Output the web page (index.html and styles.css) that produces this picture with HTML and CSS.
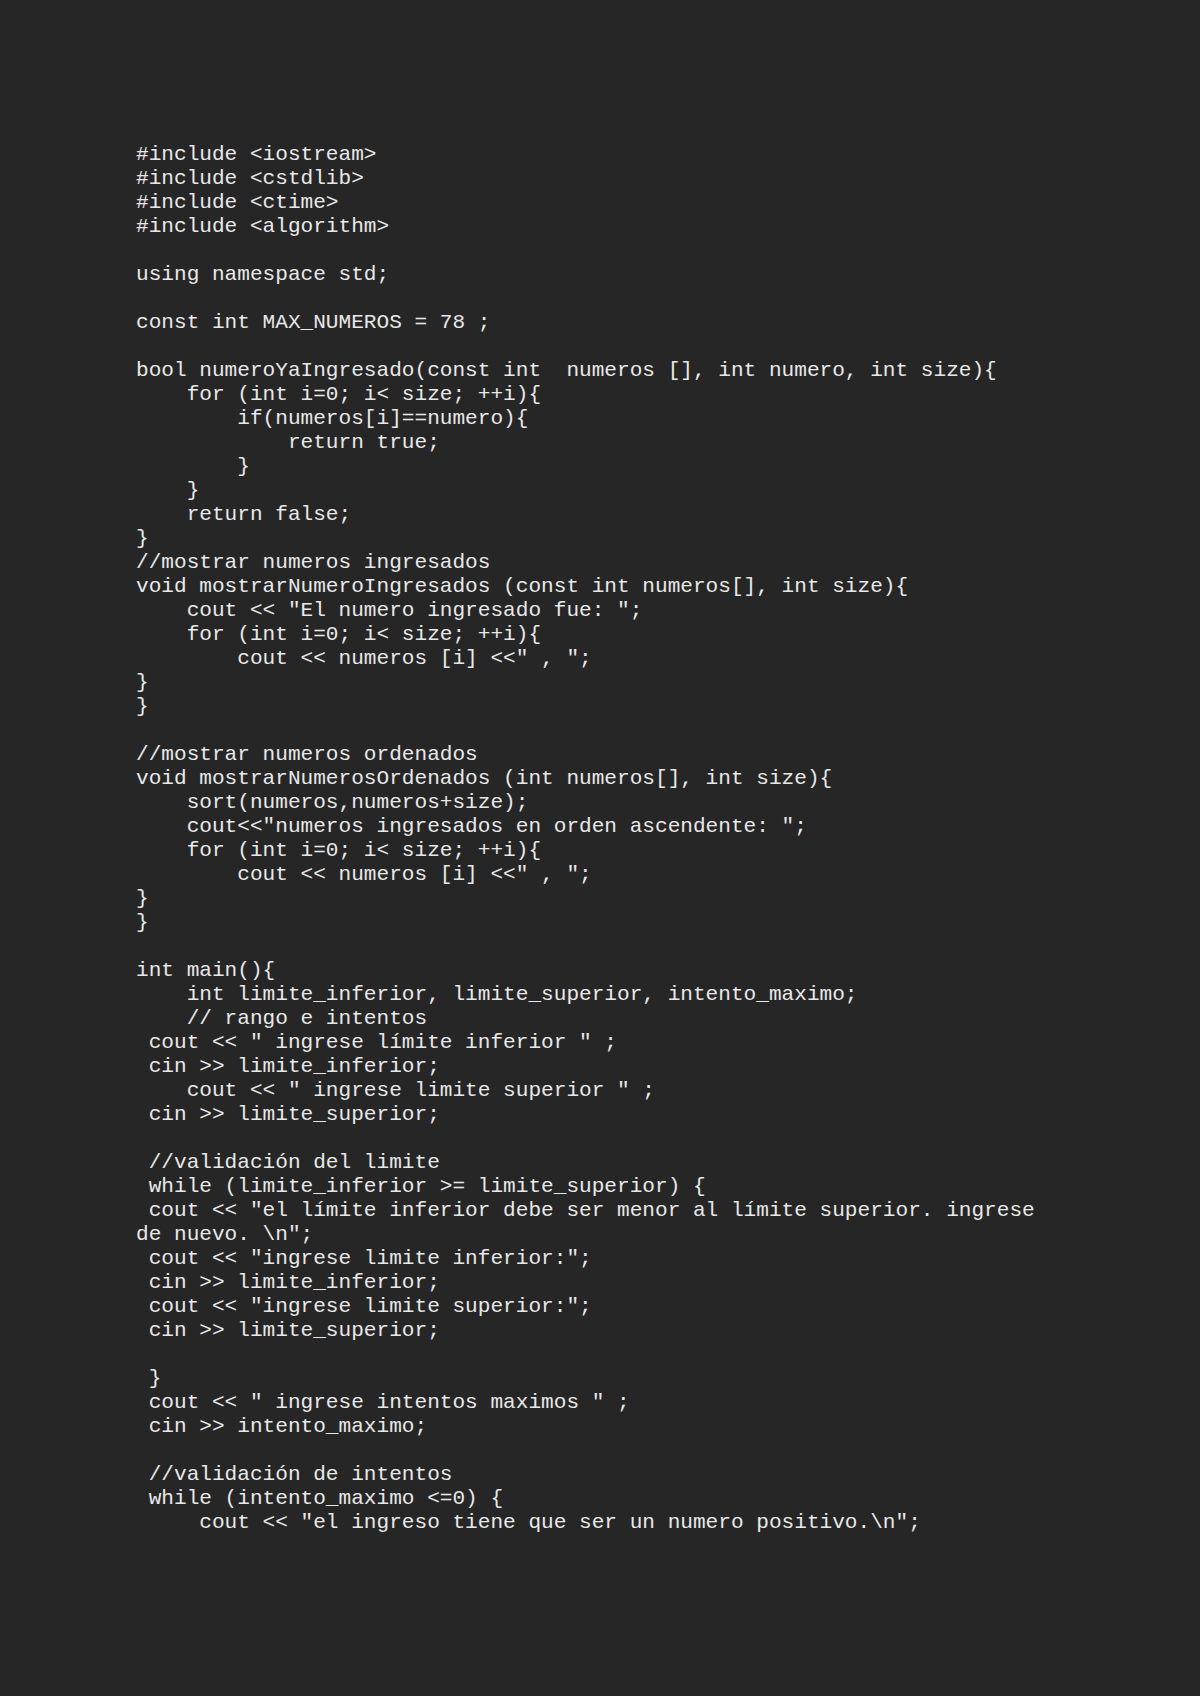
FILE: index.html
```html
<!DOCTYPE html>
<html lang="es">
<head>
<meta charset="utf-8">
<title>codigo</title>
<link rel="stylesheet" href="styles.css">
</head>
<body>
<main class="page">
<pre class="code">#include &lt;iostream&gt;
#include &lt;cstdlib&gt;
#include &lt;ctime&gt;
#include &lt;algorithm&gt;

using namespace std;

const int MAX_NUMEROS = 78 ;

bool numeroYaIngresado(const int  numeros [], int numero, int size){
    for (int i=0; i&lt; size; ++i){
        if(numeros[i]==numero){
            return true;
        }
    }
    return false;
}
//mostrar numeros ingresados
void mostrarNumeroIngresados (const int numeros[], int size){
    cout &lt;&lt; "El numero ingresado fue: ";
    for (int i=0; i&lt; size; ++i){
        cout &lt;&lt; numeros [i] &lt;&lt;" , ";
}
}

//mostrar numeros ordenados
void mostrarNumerosOrdenados (int numeros[], int size){
    sort(numeros,numeros+size);
    cout&lt;&lt;"numeros ingresados en orden ascendente: ";
    for (int i=0; i&lt; size; ++i){
        cout &lt;&lt; numeros [i] &lt;&lt;" , ";
}
}

int main(){
    int limite_inferior, limite_superior, intento_maximo;
    // rango e intentos
 cout &lt;&lt; " ingrese límite inferior " ;
 cin &gt;&gt; limite_inferior;
    cout &lt;&lt; " ingrese limite superior " ;
 cin &gt;&gt; limite_superior;

 //validación del limite
 while (limite_inferior &gt;= limite_superior) {
 cout &lt;&lt; "el límite inferior debe ser menor al límite superior. ingrese
de nuevo. \n";
 cout &lt;&lt; "ingrese limite inferior:";
 cin &gt;&gt; limite_inferior;
 cout &lt;&lt; "ingrese limite superior:";
 cin &gt;&gt; limite_superior;

 }
 cout &lt;&lt; " ingrese intentos maximos " ;
 cin &gt;&gt; intento_maximo;

 //validación de intentos
 while (intento_maximo &lt;=0) {
     cout &lt;&lt; "el ingreso tiene que ser un numero positivo.\n";</pre>
</main>
</body>
</html>
```
FILE: styles.css
```css
html, body {
  margin: 0;
  padding: 0;
  background: #262626;
}
.page {
  min-height: 1696px;
  box-sizing: border-box;
  padding: 142px 0 0 136px;
}
.code {
  margin: 0;
  font-family: "Liberation Mono", "Courier New", monospace;
  font-size: 21.1px;
  line-height: 24px;
  color: #e8e8e8;
  white-space: pre;
}
```
